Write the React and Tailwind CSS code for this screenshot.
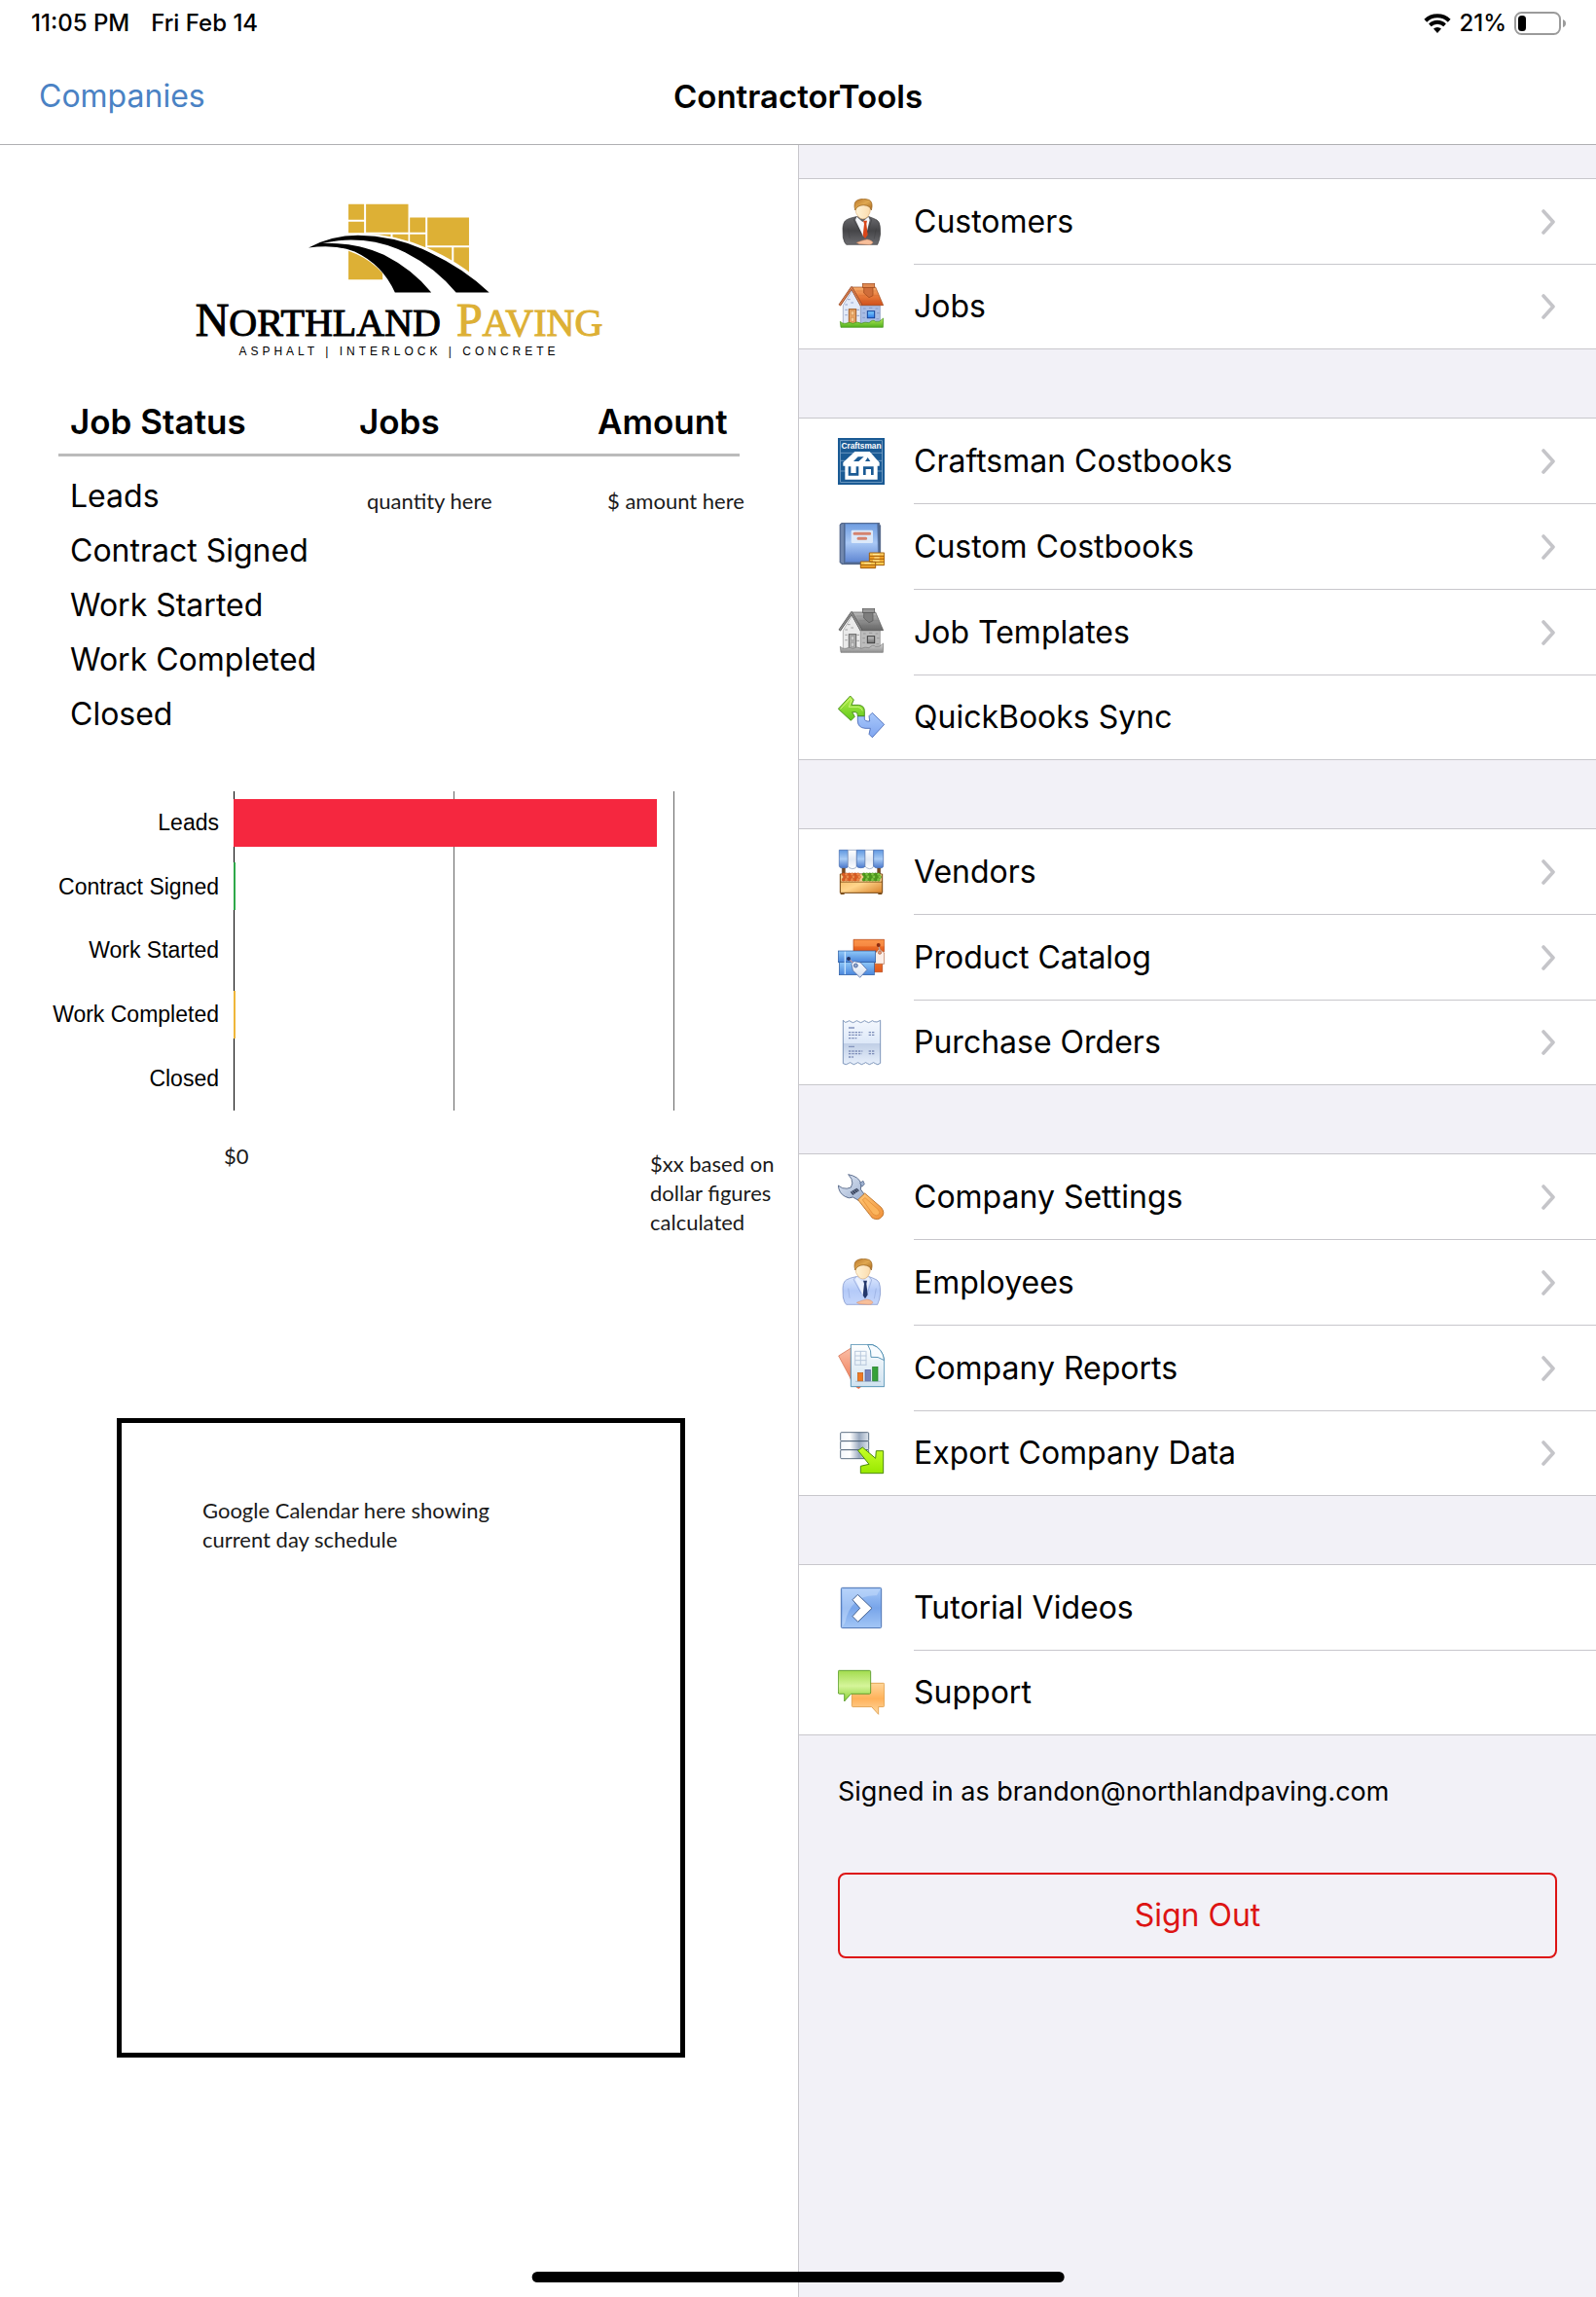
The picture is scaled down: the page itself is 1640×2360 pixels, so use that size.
import React from "react";

const Svg = ({ children, className = "" }) => (
  <svg viewBox="0 0 144 144" aria-hidden="true" className={`size-12 shrink-0 ${className}`}>
    {children}
  </svg>
);

function Grad({ id, stops, x2 = 0, y2 = 1 }) {
  return (
    <linearGradient id={id} x1="0" y1="0" x2={x2} y2={y2}>
      {stops.map((c, i) => (
        <stop key={i} offset={i / (stops.length - 1)} stopColor={c} />
      ))}
    </linearGradient>
  );
}

function Person({ id, jacket, line, tie, collar }) {
  return (
    <Svg>
      <defs>
        <Grad id={`${id}-b`} stops={jacket} />
        <Grad id={`${id}-h`} stops={["#b9762a", "#e0a850", "#a5661c"]} x2={1} />
        <Grad id={`${id}-f`} stops={["#fff3d6", "#fbdcae"]} x2={1} y2={0} />
      </defs>
      <path d="M56 56 Q36 60 26 66 Q16 72 15 92 L16 120 Q20 138 26 142 H122 Q129 128 131 108 L130 88 Q129 72 120 66 Q108 60 96 56Z" fill={`url(#${id}-b)`} stroke={line} strokeWidth="2" />
      <path d="M58 56 L76 72 L94 56 L98 66 L86 116 H78 L54 66Z" fill={collar} />
      <path d="M78 68 H90 L88 78 L92 112 L84 124 L77 114 L81 78Z" fill={tie} />
      <path d="M57 56 L48 64 L72 108 M97 56 L104 66 L92 104" fill="none" stroke={line} strokeWidth="2" opacity=".7" />
      <path d="M32 92 L36 122 M118 92 L112 124" stroke={line} strokeWidth="2" opacity=".5" />
      <path d="M58 136 Q76 128 90 126 Q104 128 108 136 Q104 143 94 142 L66 140Z" fill="#f7bf9b" stroke="#d98b62" strokeWidth="1.5" />
      <path d="M55 28 Q53 46 63 56 Q77 70 92 56 Q102 44 100 26 Q90 18 77 20 Q62 18 55 28Z" fill={`url(#${id}-f)`} stroke="#d49f60" strokeWidth="1.5" />
      <path d="M53 36 Q46 10 62 4 Q78 -3 96 4 Q110 12 103 36 L98 26 Q78 14 60 26Z" fill={`url(#${id}-h)`} stroke="#96601d" strokeWidth="2" />
    </Svg>
  );
}

function House({ id, className = "" }) {
  return (
    <Svg className={className}>
      <defs>
        <Grad id={`${id}-r`} stops={["#f7b070", "#e8793a", "#cf4f1c"]} />
        <Grad id={`${id}-g`} stops={["#b5ec5a", "#4fae1c"]} />
        <Grad id={`${id}-w`} stops={["#7fd0ff", "#2a78e8"]} />
      </defs>
      <path d="M16 68 L44 22 L72 70 V130 H16Z" fill="#e3eaf8" stroke="#8c97b8" strokeWidth="2" />
      <path d="M70 68 H130 V130 H70Z" fill="#a9bde4" stroke="#7f8fb8" strokeWidth="2" />
      <path d="M22 66 h8 M40 60 h8 M30 50 h8 M22 82 h7 M58 82 h8 M22 98 h7 M58 100 h8 M78 78 h8 M96 76 h10 M116 78 h8 M76 92 h8 M76 106 h8 M120 92 h8 M118 110 h8" stroke="#7f93c2" strokeWidth="2.5" />
      <path d="M42 12 H116 L140 68 H72Z" fill={`url(#${id}-r)`} stroke="#9b4518" strokeWidth="2" />
      <path d="M56 24 H118 M64 38 H124 M72 54 H132" stroke="#c9602a" strokeWidth="1.5" opacity=".6" />
      <path d="M5 68 L42 14 L72 68" fill="none" stroke="#8a3f22" strokeWidth="8" strokeLinejoin="round" />
      <path d="M5 68 L42 14 L72 68" fill="none" stroke="#dd8452" strokeWidth="4" strokeLinejoin="round" />
      <path d="M80 12 H108 V38 L96 44 L80 30Z" fill="#cf6d3a" stroke="#9b4518" strokeWidth="2" />
      <rect x="76" y="1" width="37" height="12" fill="#e08a52" stroke="#9b4518" strokeWidth="2" />
      <rect x="34" y="80" width="22" height="46" fill="#e9a565" stroke="#a15a22" strokeWidth="3" />
      <path d="M40 86 h10 v12 h-10z M40 106 h10 v12 h-10z" fill="#f6c891" stroke="#c07a3c" strokeWidth="1.5" />
      <rect x="91" y="86" width="22" height="21" fill={`url(#${id}-w)`} stroke="#10409a" strokeWidth="3" />
      <path d="M7 118 Q14 126 24 124 Q36 118 46 124 Q60 116 72 124 Q84 118 96 122 Q108 110 116 118 Q128 122 140 108 L139 136 H9Z" fill={`url(#${id}-g)`} stroke="#3f8f17" strokeWidth="2" />
    </Svg>
  );
}

const CraftsmanIcon = () => (
  <Svg>
    <rect width="144" height="144" fill="#1a5a94" />
    <path d="M8 46 H136 M8 70 H136 M8 102 H136" stroke="#8fb3d4" strokeWidth="2" />
    <rect x="8" y="8" width="128" height="128" fill="none" stroke="#8fb3d4" strokeWidth="2" />
    <text x="72" y="34" textAnchor="middle" fontSize="25" fontWeight="700" fontFamily="Liberation Sans, sans-serif" fill="#fff">Craftsman</text>
    <path d="M52 42 H98 L128 76 V86 H122 V128 H22 V86 H16 V76Z" fill="#fff" />
    <path d="M62 58 H80 L64 72 H48Z M92 60 L100 72 H84Z" fill="#1a5a94" />
    <path d="M36 88 V112 H60 V88 M82 114 V92 H106 V114" fill="none" stroke="#1a5a94" strokeWidth="8" />
  </Svg>
);

const CostbookIcon = () => (
  <Svg>
    <defs>
      <Grad id="cb" stops={["#6f9de0", "#a9c8f5", "#5f86d2"]} />
      <Grad id="cc" stops={["#ffe07a", "#f39a1c", "#ffd45a", "#e08510"]} />
    </defs>
    <path d="M12 1 H128 V8 H131 V124 L126 128 H12 L6 122 V6Z" fill="#51698f" stroke="#3c5075" strokeWidth="2" />
    <path d="M22 3 H122 L125 122 H22Z" fill="url(#cb)" stroke="#5673a8" strokeWidth="2" />
    <path d="M8 6 L18 3 V126 L8 122Z" fill="#7187ad" />
    <rect x="41" y="23" width="67" height="40" rx="4" fill="#dce9fa" />
    <path d="M51 34 H98 M63 49 H86" stroke="#d4836f" strokeWidth="9" strokeLinecap="round" />
    <path d="M70 120 H97 V93 H143 V131 H116 V140 H70Z" fill="url(#cc)" stroke="#a3600c" strokeWidth="3" />
    <path d="M97 103 H143 M97 112 H143 M97 121 H143 M70 130 H116 M97 120 H116 V131" fill="none" stroke="#a3600c" strokeWidth="3" />
    <path d="M108 98 h20 M112 108 h16 M108 117 h20 M82 125 h20" stroke="#fff0a8" strokeWidth="3" />
  </Svg>
);

const SyncIcon = () => (
  <Svg>
    <defs>
      <Grad id="sg" stops={["#b8f04a", "#5fc81c"]} />
      <Grad id="sb" stops={["#a9c8fa", "#7fa5f0"]} />
    </defs>
    <path d="M61 68 H82 V78 Q84 84 92 84 H98 L96 68 L106 58 L143 94 L106 134 L96 124 L100 106 H84 Q62 104 61 84Z" fill="url(#sb)" stroke="#4265b5" strokeWidth="2.5" strokeLinejoin="round" />
    <path d="M1 46 L38 6 L49 18 L42 34 H64 Q82 36 82 52 V68 H61 Q62 56 54 56 H44 L52 70 L40 82Z" fill="url(#sg)" stroke="#3c8212" strokeWidth="2.5" strokeLinejoin="round" />
    <path d="M8 46 L38 14 L42 19 L34 40 H62 Q74 42 76 52" fill="none" stroke="#e2ffa0" strokeWidth="2.5" opacity=".8" />
  </Svg>
);

const dots = (cx, cy, nx, ny, sx, sy) => {
  const out = [];
  for (let j = 0; j < ny; j++) for (let i = 0; i < nx; i++) out.push([cx + i * sx + (j % 2) * 4, cy + j * sy]);
  return out;
};

const VendorIcon = () => (
  <Svg>
    <defs>
      <Grad id="vb" stops={["#5f97e0", "#a9ccf5", "#4a78cc"]} />
      <Grad id="vw" stops={["#ffffff", "#e2e9f4", "#ffffff"]} />
      <Grad id="vc" stops={["#f4b45a", "#ffd58c", "#d8822a"]} x2={1} />
    </defs>
    <path d="M13 60 h9 v18 h-9z M122 60 h9 v18 h-9z" fill="#7b4a20" stroke="#5c3512" strokeWidth="1.5" />
    <path d="M4 4 H31 V54 Q31 59 25 59 H10 Q4 58 4 52Z" fill="url(#vb)" stroke="#3f66ab" strokeWidth="2" />
    <path d="M31 4 H58 V54 Q56 62 44 62 Q33 60 31 54Z" fill="url(#vw)" stroke="#7f92b5" strokeWidth="2" />
    <path d="M58 4 H84 V54 Q82 59 71 59 Q60 59 58 54Z" fill="url(#vb)" stroke="#3f66ab" strokeWidth="2" />
    <path d="M84 4 H110 V54 Q108 62 97 62 Q86 60 84 54Z" fill="url(#vw)" stroke="#7f92b5" strokeWidth="2" />
    <path d="M110 4 H140 V52 Q140 59 134 59 H118 Q112 58 110 54Z" fill="url(#vb)" stroke="#3f66ab" strokeWidth="2" />
    <path d="M7 78 H137 V136 H7Z" fill="url(#vc)" stroke="#744410" strokeWidth="3" />
    <path d="M7 102 H137" stroke="#744410" strokeWidth="3" />
    <path d="M8 137 h12 v4 h-12z M124 137 h12 v4 h-12z" fill="#744410" />
    <rect x="10" y="79" width="124" height="22" fill="#f6cc90" />
    {dots(17, 79, 6, 3, 9, 8).map(([x, y], i) => (
      <circle key={i} cx={x} cy={y} r="5" fill={i % 2 ? "#f08a4a" : "#dd5c22"} stroke="#b84a18" strokeWidth="1" />
    ))}
    {dots(80, 79, 6, 3, 9, 8).map(([x, y], i) => (
      <circle key={i} cx={x} cy={y} r="5" fill={i % 2 ? "#7cc842" : "#4a9a1c"} stroke="#38800f" strokeWidth="1" />
    ))}
  </Svg>
);

const CatalogIcon = () => (
  <Svg>
    <defs>
      <Grad id="po" stops={["#f88a3a", "#e2581a"]} />
      <Grad id="pb" stops={["#8fc8f8", "#4a86dc"]} />
      <Grad id="pt" stops={["#ffffff", "#d5dff0"]} />
    </defs>
    <path d="M54 55 H137 V119 H54Z" fill="url(#po)" stroke="#b04010" strokeWidth="2" />
    <path d="M48 19 H143 V56 H48Z" fill="url(#po)" stroke="#b04010" strokeWidth="2" />
    <path d="M50 22 H142 V40 H50Z" fill="#ffa25c" opacity=".5" />
    <path d="M114 62 L128 47 L143 60 V94 H114Z" fill="#fbeee8" stroke="#b0603a" strokeWidth="2" />
    <path d="M125 36 L130 56" stroke="#b8a098" strokeWidth="4" />
    <circle cx="125" cy="36" r="6" fill="#8c2c10" />
    <circle cx="129" cy="59" r="5" fill="#e89878" stroke="#a35a3a" strokeWidth="2" />
    <rect x="4" y="88" width="108" height="40" fill="url(#pb)" stroke="#2a5aa0" strokeWidth="2" />
    <rect x="1" y="54" width="115" height="35" fill="url(#pb)" stroke="#2a5aa0" strokeWidth="2" />
    <path d="M22 56 V126" stroke="#c5e3ff" strokeWidth="4" />
    <path d="M33 78 L54 98" stroke="#c09aa8" strokeWidth="4" />
    <circle cx="33" cy="78" r="6" fill="#1f2f5c" />
    <path d="M42 94 L50 86 L70 90 L90 112 L68 136 L46 114Z" fill="url(#pt)" stroke="#5470a8" strokeWidth="2.5" />
    <circle cx="55" cy="99" r="6" fill="#8fa5cc" stroke="#44609a" strokeWidth="2.5" />
  </Svg>
);

const OrderIcon = () => (
  <Svg>
    <defs>
      <Grad id="or" stops={["#f4f8fe", "#dde8f8"]} />
      <Grad id="or2" stops={["#c0cfe6", "#e8f0fc"]} />
    </defs>
    <path d="M16 4 q7 10 14 4 q4 -6 10 0 q7 6 13 0 q5 -6 11 0 q7 6 13 0 q5 -6 11 0 q7 6 13 0 q5 -6 11 0 q7 4 19 -4 V75 H16Z" fill="url(#or)" />
    <path d="M16 75 H131 V136 q-9 8 -16 1 q-5 -6 -11 0 q-7 6 -13 0 q-5 -6 -11 0 q-7 6 -13 0 q-5 -6 -11 0 q-7 6 -13 0 q-5 -6 -11 0 q-6 6 -16 0Z" fill="url(#or2)" />
    <path d="M16 4 q7 10 14 4 q4 -6 10 0 q7 6 13 0 q5 -6 11 0 q7 6 13 0 q5 -6 11 0 q7 6 13 0 q5 -6 11 0 q7 4 19 -4 V136 q-9 8 -16 1 q-5 -6 -11 0 q-7 6 -13 0 q-5 -6 -11 0 q-7 6 -13 0 q-5 -6 -11 0 q-7 6 -13 0 q-5 -6 -11 0 q-6 6 -16 0Z" fill="none" stroke="#6783ad" strokeWidth="2.5" />
    <path d="M33 27 H51 M33 85 H51" stroke="#8494bd" strokeWidth="4" />
    <path d="M33 41 H76 M33 49 H74 M33 59 H58 M95 41 H115 M95 49 H115 M33 99 H76 M33 107 H74 M33 117 H48 M95 99 H115 M95 107 H115" stroke="#7d8db8" strokeWidth="4" strokeDasharray="7 3" />
  </Svg>
);

const WrenchIcon = () => (
  <Svg>
    <defs>
      <Grad id="wm" stops={["#e2eaf6", "#9db0d0"]} x2={1} />
      <Grad id="wh" stops={["#ffc878", "#f09038"]} x2={1} />
    </defs>
    <path d="M1 36 Q3 60 22 70 Q34 78 46 72 L64 82 L82 64 L70 48 L72 30 Q64 8 32 2 L42 16 Q48 30 40 42 Q28 48 14 44Z" fill="url(#wm)" stroke="#44587c" strokeWidth="2.5" strokeLinejoin="round" />
    <path d="M68 28 L78 22 L82 32 L74 40Z" fill="#9db0d0" stroke="#44587c" strokeWidth="2" />
    <path d="M38 56 L58 44 L66 52 L46 66Z" fill="#3a4660" />
    <path d="M43 54 l8 10 M49 50 l8 10 M55 47 l8 9" stroke="#9aa8c2" strokeWidth="2" />
    <path d="M62 80 L83 60 L134 104 Q146 120 136 132 Q124 146 106 136Z" fill="url(#wh)" stroke="#b5681c" strokeWidth="2.5" />
    <path d="M76 80 L84 74 L124 110 Q132 120 126 126 Q118 132 108 124Z" fill="#fbb45c" stroke="#e08a34" strokeWidth="2" />
  </Svg>
);

const ReportIcon = () => (
  <Svg>
    <defs>
      <Grad id="rp" stops={["#ffffff", "#cfe2f0"]} />
      <Grad id="rr" stops={["#fbc0a8", "#ee7c58"]} />
    </defs>
    <path d="M2 36 L44 10 V118 L36 100Z" fill="url(#rr)" stroke="#d06a48" strokeWidth="2" />
    <path d="M52 130 h22 l-10 8z" fill="#ee6a40" />
    <path d="M40 1 H106 Q138 14 143 50 V131 H40Z" fill="url(#rp)" stroke="#3c82a8" strokeWidth="2.5" />
    <path d="M92 2 Q104 20 102 40 Q124 36 143 50 Q138 12 106 2Z" fill="#f8fcff" stroke="#3c82a8" strokeWidth="2.5" />
    <path d="M53 22 H86 M53 36 H88 M53 50 H88 M53 64 H88 M53 21 V65 M70 21 V65 M87 21 V65" stroke="#b9c8dc" strokeWidth="3" />
    <rect x="61" y="88" width="16" height="26" fill="#ef7a24" stroke="#c25c10" strokeWidth="2" />
    <rect x="84" y="79" width="16" height="35" fill="#7684bb" stroke="#505f98" strokeWidth="2" />
    <rect x="107" y="70" width="16" height="44" fill="#35a13a" stroke="#1f7a22" strokeWidth="2" />
    <path d="M54 115 H132" stroke="#9ab0c4" strokeWidth="2" />
  </Svg>
);

const ExportIcon = () => (
  <Svg>
    <defs>
      <Grad id="ed" stops={["#f4f8fc", "#ffffff", "#98a8be", "#dfe6ee"]} x2={1} y2={0} />
      <Grad id="ea" stops={["#c8ff28", "#98e800"]} />
    </defs>
    {[8, 35, 62].map((y) => (
      <rect key={y} x="8" y={y} width="87" height="27" rx="3" fill="url(#ed)" stroke="#40546c" strokeWidth="2.5" />
    ))}
    <path d="M62 64 L76 54 L116 88 L118 65 H140 V134 H70 V112 L96 106Z" fill="url(#ea)" stroke="#4c8a0c" strokeWidth="3" strokeLinejoin="round" />
  </Svg>
);

const TutorialIcon = () => (
  <Svg>
    <defs>
      <Grad id="tv" stops={["#a5c8f8", "#78a5ea", "#a2c6f6"]} />
    </defs>
    <rect x="10" y="10" width="124" height="124" rx="4" fill="url(#tv)" stroke="#4c74b4" strokeWidth="3" />
    <path d="M14 14 H130 L120 34 Q40 30 22 118 L14 130Z" fill="#cfe2fc" opacity=".45" />
    <path d="M45 47 L61 31 L105 73 L62 115 L45 98 L68 73Z" fill="#fff" stroke="#45618f" strokeWidth="3" />
  </Svg>
);

const SupportIcon = () => (
  <Svg>
    <defs>
      <Grad id="su" stops={["#a2dc4e", "#d5f59a", "#86d030"]} />
      <Grad id="so" stops={["#ffd69a", "#ffb25a", "#ffd9a2"]} />
    </defs>
    <path d="M46 43 H140 Q143 43 143 46 V112 Q143 116 139 116 H125 V139 L104 116 H46 Q43 116 43 112 V46Z" fill="url(#so)" stroke="#dd9a44" strokeWidth="2.5" />
    <path d="M4 4 H97 Q101 4 101 8 V72 Q101 76 97 76 H40 L20 99 V76 H4 Q1 76 1 72 V8 Q1 4 4 4Z" fill="url(#su)" stroke="#4f9420" strokeWidth="2.5" />
  </Svg>
);

const sections = [
  [
    ["Customers", <Person id="cu" jacket={["#6a6a6e", "#454548", "#6c6c70"]} line="#38383a" tie="#d8461a" collar="#f6f8fc" />, true],
    ["Jobs", <House id="jb" />, true],
  ],
  [
    ["Craftsman Costbooks", <CraftsmanIcon />, true],
    ["Custom Costbooks", <CostbookIcon />, true],
    ["Job Templates", <House id="jt" className="grayscale" />, true],
    ["QuickBooks Sync", <SyncIcon />, false],
  ],
  [
    ["Vendors", <VendorIcon />, true],
    ["Product Catalog", <CatalogIcon />, true],
    ["Purchase Orders", <OrderIcon />, true],
  ],
  [
    ["Company Settings", <WrenchIcon />, true],
    ["Employees", <Person id="em" jacket={["#dbe6fd", "#b4caf8", "#c5d6fb"]} line="#7289c4" tie="#24386c" collar="#eaf1ff" />, true],
    ["Company Reports", <ReportIcon />, true],
    ["Export Company Data", <ExportIcon />, true],
  ],
  [
    ["Tutorial Videos", <TutorialIcon />, false],
    ["Support", <SupportIcon />, false],
  ],
];

const Chevron = () => (
  <svg viewBox="0 0 16 26" aria-hidden="true" className="mr-[41px] h-[26px] w-4 shrink-0">
    <path d="M3 2 L13 13 L3 24" fill="none" stroke="#c5c5c9" strokeWidth="3.6" strokeLinecap="round" strokeLinejoin="round" />
  </svg>
);

function Section({ rows }) {
  return (
    <ul className="bg-white">
      {rows.map(([label, icon, chevron]) => (
        <li key={label} className="group h-[88px] border-[#c8c7cc] first:border-t last:border-b">
          <a href="#" className="flex h-full items-center pl-10">
            {icon}
            <span className="ml-[30px] flex h-full flex-1 items-center justify-between border-t border-[#c8c7cc] group-first:border-transparent">
              {label}
              {chevron && <Chevron />}
            </span>
          </a>
        </li>
      ))}
    </ul>
  );
}

function StatusBar() {
  return (
    <div className="flex h-12 items-center justify-between pr-[30px] pl-8 text-[24px] font-medium">
      <div className="flex gap-[22px]">
        <span>11:05 PM</span>
        <span>Fri Feb 14</span>
      </div>
      <div className="flex items-center gap-2">
        <svg viewBox="0 0 28 20" className="h-5 w-7" aria-label="Wi-Fi">
          <path d="M1.8 7.2 A17.6 17.6 0 0 1 26.2 7.2" fill="none" stroke="#000" strokeWidth="4" />
          <path d="M6.4 11.8 A11 11 0 0 1 21.6 11.8" fill="none" stroke="#000" strokeWidth="3.8" />
          <path d="M10 15.6 A5.8 5.8 0 0 1 18 15.6 L14 20Z" fill="#000" />
        </svg>
        <span>21%</span>
        <svg viewBox="0 0 54 24" className="h-6 w-[54px]" aria-label="Battery">
          <rect x="1" y="1" width="46" height="22" rx="6.5" fill="none" stroke="#9b9b9b" strokeWidth="2" />
          <rect x="4" y="4" width="8" height="16" rx="3.5" fill="#000" />
          <path d="M50 8 Q53 9 53 12 Q53 15 50 16Z" fill="#9b9b9b" />
        </svg>
      </div>
    </div>
  );
}

function Logo() {
  return (
    <div className="flex flex-col items-center">
      <svg viewBox="408 58 560 275" className="h-[92px] w-[187px]" aria-hidden="true">
        <g fill="#ddb035">
          <path d="M531 60h48v48h-48z M585 60h130v87h-130z M531 114h48v34h-48z M720 101h48v46h-48z M774 101h128v86h-128z M600 153h61v30h-61z M667 153h48v60h-48z M720 153h48v80h-48z M774 193h75v90h-75z M855 193h47v85h-47z M531 190h105v102h-105z" />
        </g>
        <path d="M405 195 Q480 148 570 150 Q680 152 790 202 Q905 255 970 333 H672 Q634 240 531 204 Q480 190 405 195Z" fill="#fff" />
        <path d="M408 194 Q480 156 560 156 Q680 158 780 208 Q890 260 964 332 H862 Q800 256 705 208 Q610 162 500 172 L450 180 Q560 178 640 216 Q730 262 786 332 H674 Q636 246 550 206 Q490 182 408 194Z" fill="#000" />
      </svg>
      <p className="mt-2 flex h-10 items-baseline gap-4 font-['Liberation_Serif',serif] text-[40px] leading-10 whitespace-nowrap [-webkit-text-stroke:1px]">
        <span><span className="text-[48px]">N</span>ORTHLAND</span>
        <span className="text-[#ddb035]"><span className="text-[48px]">P</span>AVING</span>
      </p>
      <p className="mt-1 font-['Liberation_Sans',sans-serif] text-[12px] leading-4 tracking-[4px] whitespace-nowrap">ASPHALT | INTERLOCK | CONCRETE</p>
    </div>
  );
}

const statuses = ["Leads", "Contract Signed", "Work Started", "Work Completed", "Closed"];
const note = "font-[Lato,sans-serif] text-[22px] text-[#1a1a1a]";

function StatusTable() {
  return (
    <table className="w-full table-fixed text-left">
      <colgroup>
        <col className="w-[43%]" />
        <col className="w-[35%]" />
        <col />
      </colgroup>
      <thead className="border-b-[3px] border-[#bbbbbb] text-[35px] font-semibold">
        <tr className="h-[70px]">
          <th className="pt-1 pl-3 font-semibold">Job Status</th>
          <th className="pt-1 pl-2 font-semibold">Jobs</th>
          <th className="pt-1 pl-2 font-semibold">Amount</th>
        </tr>
      </thead>
      <tbody className="before:block before:h-[13px]">
        {statuses.map((s, i) => (
          <tr key={s} className="h-14">
            <th className="pl-3 font-normal whitespace-nowrap">{s}</th>
            <td className="pt-2 pl-4 whitespace-nowrap"><span className={note}>{i === 0 && "quantity here"}</span></td>
            <td className="pt-2 pl-[18px] whitespace-nowrap"><span className={note}>{i === 0 && "$ amount here"}</span></td>
          </tr>
        ))}
      </tbody>
    </table>
  );
}

const bars = [
  ["Leads", "w-[96%] bg-[#f5273f]"],
  ["Contract Signed", "w-[2px] bg-[#2fa84a]"],
  ["Work Started", "w-0"],
  ["Work Completed", "w-[2px] bg-[#efb63a]"],
  ["Closed", "w-0"],
];

function Chart() {
  return (
    <div>
      <div className="flex h-[328px]">
        <div className="flex w-[225px] flex-col text-right font-['Liberation_Sans',sans-serif] text-[23px] whitespace-nowrap">
          {bars.map(([l]) => (
            <span key={l} className="flex flex-1 items-center justify-end">{l}</span>
          ))}
        </div>
        <div className="relative mr-[127px] ml-[15px] flex flex-1 flex-col">
          <div className="absolute inset-0 grid grid-cols-2 border-r border-l border-r-[#666] border-l-black">
            <div className="border-r border-[#666]" />
          </div>
          {bars.map(([l, c]) => (
            <div key={l} className="relative flex flex-1 items-center">
              <div className={`h-[49px] ${c}`} />
            </div>
          ))}
        </div>
      </div>
      <div className={`mt-8 flex justify-between pr-[22px] pl-[230px] leading-[30px] ${note}`}>
        <span>$0</span>
        <p className="mt-2 w-[130px]">$xx based on dollar figures calculated</p>
      </div>
    </div>
  );
}

export default function App() {
  return (
    <div className="relative flex min-h-screen flex-col bg-white font-[Inter,sans-serif] text-[32px] leading-10 text-black">
      <header className="border-b border-[#b0b0b3]">
        <StatusBar />
        <div className="grid h-[100px] grid-cols-3 items-center px-10 pt-0.5">
          <a href="#" className="justify-self-start text-[#4a82c4]">Companies</a>
          <h1 className="justify-self-center text-[33px] font-semibold">ContractorTools</h1>
        </div>
      </header>
      <main className="grid flex-1 grid-cols-2">
        <section className="pt-[60px]">
          <Logo />
          <div className="mt-7 px-[60px]">
            <StatusTable />
          </div>
          <div className="mt-[51px]">
            <Chart />
          </div>
          <div className={`mt-[186px] mr-[116px] ml-[120px] h-[657px] border-[5px] border-black px-[83px] py-[75px] leading-[30px] ${note}`}>
            <p className="max-w-[310px]">Google Calendar here showing current day schedule</p>
          </div>
        </section>
        <section className="border-l border-[#c8c7cc] bg-[#f2f1f7] pt-[34px]">
          <nav className="flex flex-col gap-[70px]">
            {sections.map((rows, i) => (
              <Section key={i} rows={rows} />
            ))}
          </nav>
          <div className="px-10 pt-[38px]">
            <p className="text-[27px]">Signed in as brandon@northlandpaving.com</p>
            <button type="button" className="mt-[63px] h-[88px] w-full rounded-lg border-2 border-[#dd1414] text-[#dd1414]">Sign Out</button>
          </div>
        </section>
      </main>
      <div className="absolute bottom-[15px] left-1/2 h-[11px] w-1/3 -translate-x-1/2 rounded-full bg-black" />
    </div>
  );
}
